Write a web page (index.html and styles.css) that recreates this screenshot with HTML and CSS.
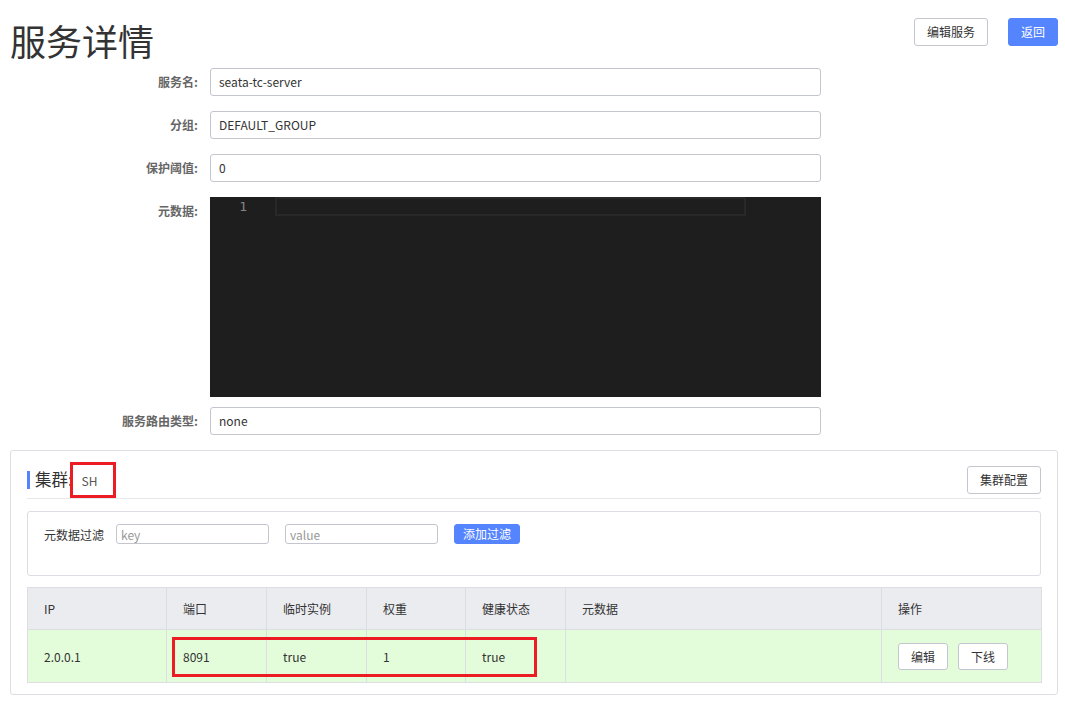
FILE: index.html
```html
<!DOCTYPE html>
<html lang="zh-CN">
<head>
<meta charset="utf-8">
<title>服务详情</title>
<link rel="stylesheet" href="styles.css">
</head>
<body>
<div class="page">
  <div class="page-header">
    <h1 class="page-title">服务详情</h1>
    <div class="header-actions">
      <button class="btn">编辑服务</button>
      <button class="btn btn-primary">返回</button>
    </div>
  </div>

  <div class="form">
    <div class="form-row">
      <label class="form-label">服务名:</label>
      <div class="input">seata-tc-server</div>
    </div>
    <div class="form-row">
      <label class="form-label">分组:</label>
      <div class="input">DEFAULT_GROUP</div>
    </div>
    <div class="form-row">
      <label class="form-label">保护阈值:</label>
      <div class="input">0</div>
    </div>
    <div class="form-row form-row-editor">
      <label class="form-label">元数据:</label>
      <div class="editor">
        <div class="editor-line">
          <span class="line-number">1</span>
          <span class="line-current"></span>
        </div>
      </div>
    </div>
    <div class="form-row">
      <label class="form-label">服务路由类型:</label>
      <div class="input">none</div>
    </div>
  </div>

  <div class="card">
    <div class="card-header">
      <div class="card-title">集群:<span class="cluster-name">SH</span></div>
      <button class="btn">集群配置</button>
    </div>

    <div class="filter-box">
      <span class="filter-label">元数据过滤</span>
      <input class="filter-input" placeholder="key">
      <input class="filter-input" placeholder="value">
      <button class="btn btn-primary btn-small">添加过滤</button>
    </div>

    <table class="table">
      <colgroup>
        <col style="width:139px">
        <col style="width:100px">
        <col style="width:100px">
        <col style="width:99px">
        <col style="width:100px">
        <col style="width:316px">
        <col style="width:160px">
      </colgroup>
      <thead>
        <tr>
          <th>IP</th>
          <th>端口</th>
          <th>临时实例</th>
          <th>权重</th>
          <th>健康状态</th>
          <th>元数据</th>
          <th>操作</th>
        </tr>
      </thead>
      <tbody>
        <tr>
          <td>2.0.0.1</td>
          <td>8091</td>
          <td>true</td>
          <td>1</td>
          <td>true</td>
          <td></td>
          <td class="ops"><button class="btn">编辑</button><button class="btn">下线</button></td>
        </tr>
      </tbody>
    </table>

    <div class="mark mark-name"></div>
    <div class="mark mark-row"></div>
  </div>
</div>
</body>
</html>
```

FILE: styles.css
```css
* {
  box-sizing: border-box;
}

html, body {
  margin: 0;
  padding: 0;
  background: #fff;
}

body {
  font-family: "Noto Sans CJK SC", "Noto Sans", sans-serif;
  font-size: 12px;
  color: #333;
}

.page {
  padding: 0 7px 0 10px;
}

.page-header {
  display: flex;
  justify-content: space-between;
  align-items: flex-start;
  padding-top: 16px;
  height: 68px;
}

.page-title {
  margin: 0;
  font-size: 36px;
  line-height: 48px;
  font-weight: normal;
  color: #333;
}

.header-actions {
  display: flex;
  gap: 20px;
  margin-top: 2px;
}

.btn {
  font-family: inherit;
  font-size: 12px;
  height: 28px;
  line-height: 26px;
  padding: 0 12px;
  border: 1px solid #c4c6cf;
  border-radius: 3px;
  background: #fff;
  color: #333;
  cursor: pointer;
}

.btn-primary {
  background: #5584ff;
  border-color: #5584ff;
  color: #fff;
}

.btn-small {
  height: 20px;
  line-height: 18px;
  padding: 0 8px;
}

/* form */
.form-row {
  display: grid;
  grid-template-columns: 200px 611px;
  margin-bottom: 15px;
}

.form-row-editor {
  margin-bottom: 10px;
}

.form-label {
  padding-right: 12px;
  text-align: right;
  line-height: 28px;
  color: #666;
  font-weight: bold;
}

.input {
  height: 28px;
  line-height: 26px;
  padding: 0 8px;
  border: 1px solid #c4c6cf;
  border-radius: 3px;
  color: #333;
}

.editor {
  height: 200px;
  background: #1e1e1e;
}

.editor-line {
  display: flex;
  height: 19px;
}

.line-number {
  width: 65px;
  padding-right: 28px;
  text-align: right;
  font-family: "DejaVu Sans Mono", monospace;
  font-size: 13px;
  line-height: 19px;
  color: #858585;
}

.line-current {
  width: 471px;
  border: 2px solid #282828;
}

/* card */
.card {
  position: relative;
  border: 1px solid #dcdee3;
  border-radius: 3px;
  padding: 15px 16px 11px 16px;
}

.card-header {
  display: flex;
  justify-content: space-between;
  align-items: center;
  padding-bottom: 4px;
  border-bottom: 1px solid #e6e7eb;
}

.card-title {
  border-left: 3px solid #5584ff;
  padding-left: 5px;
  font-size: 16.5px;
  line-height: 16px;
  color: #333;
}

.cluster-name {
  margin-left: 9px;
  font-size: 12px;
  color: #555;
}

.filter-box {
  display: flex;
  align-items: center;
  margin-top: 12px;
  padding: 12px 16px 31px;
  border: 1px solid #dcdee3;
  border-radius: 3px;
}

.filter-label {
  margin-right: 12px;
  color: #333;
}

.filter-input {
  width: 153px;
  height: 20px;
  margin: 0 16px 0 0;
  padding: 0 4px;
  border: 1px solid #c4c6cf;
  border-radius: 3px;
  font-family: inherit;
  font-size: 12px;
  color: #333;
  outline: none;
}

.filter-input::placeholder {
  color: #999;
}

.table {
  margin-top: 11px;
  width: 100%;
  border-collapse: collapse;
  table-layout: fixed;
  border: 1px solid #dcdee3;
}

.table th,
.table td {
  border: 1px solid #dcdee3;
  padding: 0 16px;
  text-align: left;
  font-weight: normal;
  color: #333;
}

.table th {
  height: 42px;
  background: #ebecf0;
}

.table td {
  height: 53px;
  background: #e3fcda;
}

.ops .btn {
  height: 27px;
  line-height: 25px;
  margin-right: 10px;
}

/* red annotation boxes */
.mark {
  position: absolute;
  border: 3px solid #ec1c24;
}

.mark-name {
  left: 59px;
  top: 11px;
  width: 46px;
  height: 36px;
}

.mark-row {
  left: 161px;
  top: 186px;
  width: 365px;
  height: 40px;
}
```
